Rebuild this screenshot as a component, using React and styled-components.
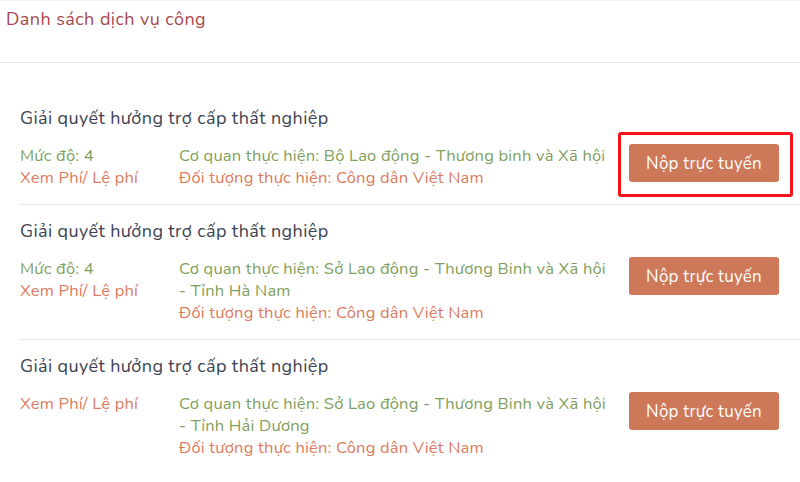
import React from "react";
import styled, { createGlobalStyle } from "styled-components";

const Global = createGlobalStyle`
  html, body { margin: 0; padding: 0; background: #fff; }
  body { font-family: "Nunito", "Lato", "Noto Sans", sans-serif; -webkit-font-smoothing: antialiased; }
  * { box-sizing: border-box; }
`;

const Page = styled.div`
  width: 800px;
  height: 482px;
  overflow: hidden;
  background: #fff;
  border-top: 1px solid #eef0f2;
`;

const Header = styled.div`
  height: 62px;
  padding: 6px 6px 0;
  border-bottom: 1px solid #e6e7e9;
`;

const Heading = styled.h2`
  margin: 0;
  font-size: 18px;
  line-height: 24px;
  letter-spacing: 0.45px;
  font-weight: 400;
  color: #a8474d;
`;

const List = styled.div`
  padding: 29px 0 0 20px;
`;

const Item = styled.div`
  padding: 14px 0 15px;
  border-bottom: ${(p) => (p.$last ? "none" : "1px solid #e6e7e9")};
`;

const Title = styled.div`
  font-size: 18px;
  line-height: 24px;
  letter-spacing: 0.4px;
  color: #3b4350;
  margin-bottom: 15px;
`;

const Details = styled.div`
  display: grid;
  grid-template-columns: 159px 431px 1fr;
  align-items: start;
`;

const Column = styled.div`
  display: flex;
  flex-direction: column;
`;

const Line = styled.span`
  font-size: 16.5px;
  line-height: 22px;
  letter-spacing: 0.2px;
  color: ${(p) => (p.$tone === "green" ? "#7f9f5c" : "#dc7b5d")};
`;

const ButtonCell = styled.div`
  display: flex;
  padding-left: 19px;
  margin-top: -1px;
`;

const ButtonWrap = styled.div`
  position: relative;
`;

const Highlight = styled.div`
  position: absolute;
  top: -12px;
  left: -11px;
  right: -14px;
  bottom: -15px;
  border: 3px solid #f5121b;
  border-radius: 3px;
  pointer-events: none;
`;

const SubmitButton = styled.button`
  width: 150px;
  height: 38px;
  padding: 0;
  border: none;
  border-radius: 3px;
  background: #cd7858;
  color: #fff;
  font-family: inherit;
  font-size: 17px;
  letter-spacing: 0.2px;
  cursor: pointer;
`;

const services = [
  {
    level: "4",
    agency: "Bộ Lao động - Thương binh và Xã hội",
    target: "Công dân Việt Nam",
    highlighted: true,
  },
  {
    level: "4",
    agency: "Sở Lao động - Thương Binh và Xã hội - Tỉnh Hà Nam",
    target: "Công dân Việt Nam",
  },
  {
    agency: "Sở Lao động - Thương Binh và Xã hội - Tỉnh Hải Dương",
    target: "Công dân Việt Nam",
  },
];

export default function App() {
  return (
    <>
      <Global />
      <Page>
        <Header>
          <Heading>Danh sách dịch vụ công</Heading>
        </Header>
        <List>
          {services.map((s, i) => (
            <Item key={i} $last={i === services.length - 1}>
              <Title>Giải quyết hưởng trợ cấp thất nghiệp</Title>
              <Details>
                <Column>
                  {s.level && <Line $tone="green">Mức độ: {s.level}</Line>}
                  <Line $tone="orange">Xem Phí/ Lệ phí</Line>
                </Column>
                <Column>
                  <Line $tone="green">Cơ quan thực hiện: {s.agency}</Line>
                  <Line $tone="orange">Đối tượng thực hiện: {s.target}</Line>
                </Column>
                <ButtonCell>
                  <ButtonWrap>
                    <SubmitButton>Nộp trực tuyến</SubmitButton>
                    {s.highlighted && <Highlight />}
                  </ButtonWrap>
                </ButtonCell>
              </Details>
            </Item>
          ))}
        </List>
      </Page>
    </>
  );
}
